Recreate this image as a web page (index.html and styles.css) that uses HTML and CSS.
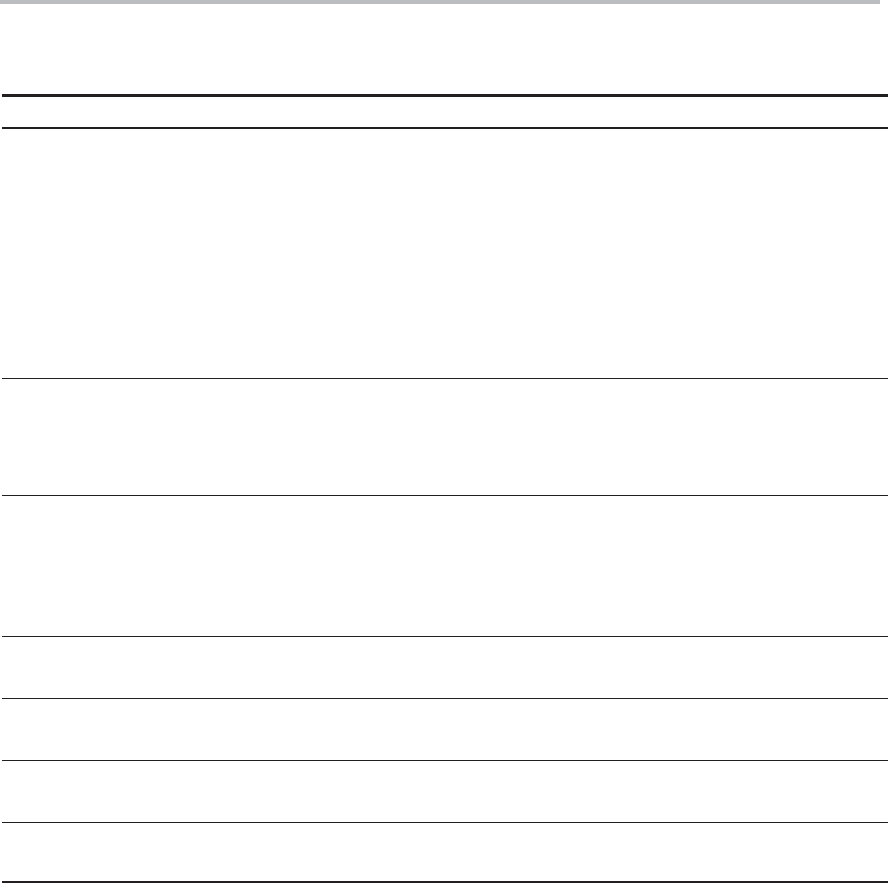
FILE: index.html
```html
<!DOCTYPE html>
<html lang="en">
<head>
<meta charset="utf-8">
<title>Table</title>
<link rel="stylesheet" href="styles.css">
</head>
<body>
<div class="topbar"></div>
<div class="table">
  <div class="row head"></div>
  <div class="row r1"></div>
  <div class="row r2"></div>
  <div class="row r3"></div>
  <div class="row r4"></div>
  <div class="row r4"></div>
  <div class="row r4"></div>
  <div class="row last"></div>
</div>
</body>
</html>
```
FILE: styles.css
```css
html, body {
  margin: 0;
  padding: 0;
  background: #ffffff;
  font-family: "Liberation Sans", Arial, sans-serif;
}
.topbar {
  width: 880px;
  height: 4px;
  background: #bcbdc0;
}
.table {
  margin: 90px 0 0 2px;
  width: 886px;
  display: flex;
  flex-direction: column;
  border-top: 3px solid #231f20;
}
.row {
  border-bottom: 1px solid #231f20;
  box-sizing: content-box;
}
.head {
  height: 30px;
  border-bottom: 2px solid #231f20;
}
.r1 { height: 249px; }
.r2 { height: 116px; }
.r3 { height: 140px; }
.r4 { height: 61px; }
.last {
  height: 58px;
  border-bottom: 2px solid #231f20;
}
```
